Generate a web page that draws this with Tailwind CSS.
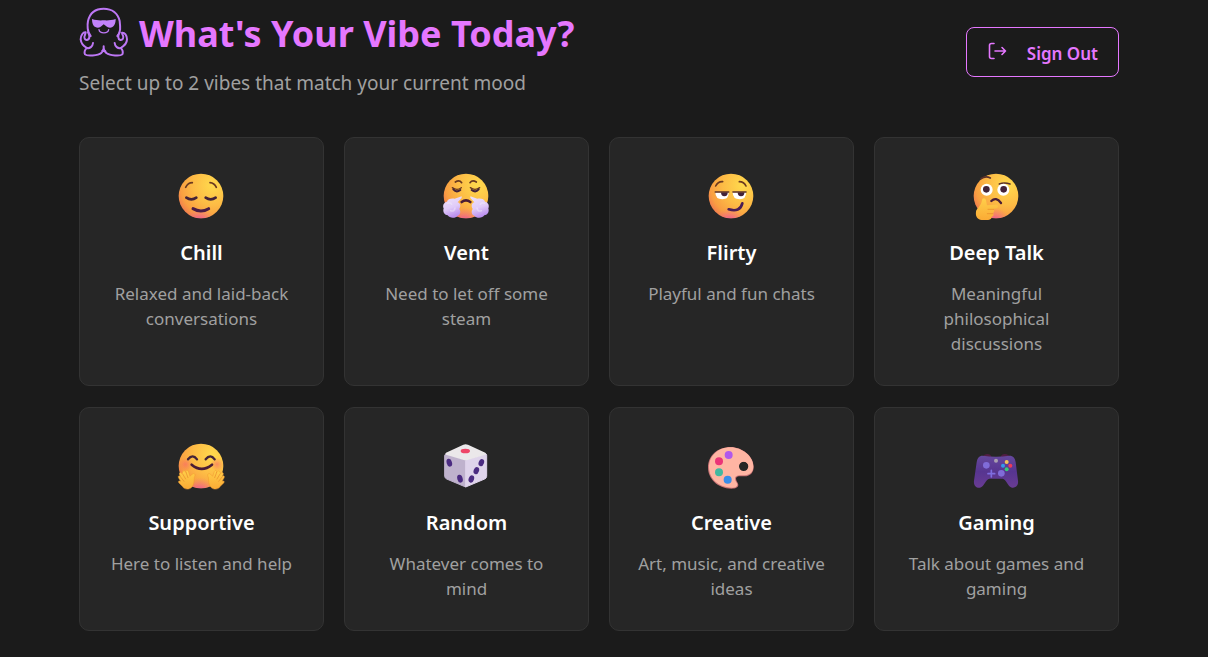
<!DOCTYPE html>
<html lang="en">
    <head>
        <meta charset="UTF-8">
        <meta name="viewport" content="width=device-width, initial-scale=1.0">
        <title>What's Your Vibe Today?</title>
        <script src="https://cdn.jsdelivr.net/npm/@tailwindcss/browser@4"></script>
    </head>
    <body class="bg-[#1b1b1b] text-white font-['Noto_Sans',sans-serif] overflow-x-hidden">

        <!-- Shared gradients for the vibe icons -->
        <svg class="absolute w-0 h-0" aria-hidden="true">
            <defs>
                <radialGradient id="face" cx="0.76" cy="0.26" r="0.9">
                    <stop offset="0" stop-color="#ffda4d"/>
                    <stop offset="0.5" stop-color="#fdbb45"/>
                    <stop offset="0.8" stop-color="#f99f42"/>
                    <stop offset="1" stop-color="#ee7352"/>
                </radialGradient>
                <radialGradient id="chin" cx="0.48" cy="1.08" r="0.32">
                    <stop offset="0" stop-color="#ee4fa6"/>
                    <stop offset="1" stop-color="#f1708a" stop-opacity="0"/>
                </radialGradient>
                <radialGradient id="blush">
                    <stop offset="0" stop-color="#f8636b" stop-opacity="0.6"/>
                    <stop offset="1" stop-color="#f8636b" stop-opacity="0"/>
                </radialGradient>
                <linearGradient id="puff" x1="0" y1="0" x2="0.3" y2="1">
                    <stop offset="0" stop-color="#efe2fb"/>
                    <stop offset="0.6" stop-color="#e0cbf8"/>
                    <stop offset="1" stop-color="#bd92f0"/>
                </linearGradient>
                <linearGradient id="hand" x1="0" y1="0" x2="0" y2="1">
                    <stop offset="0" stop-color="#ffcf4a"/>
                    <stop offset="1" stop-color="#fbab35"/>
                </linearGradient>
                <linearGradient id="pad" x1="0" y1="0" x2="0" y2="1">
                    <stop offset="0" stop-color="#65489d"/>
                    <stop offset="0.5" stop-color="#573590"/>
                    <stop offset="1" stop-color="#693c93"/>
                </linearGradient>
            </defs>
        </svg>

        <main class="pl-5 pr-[30px] pb-6">
            <div class="max-w-[1040px] mx-auto">

                <!-- Header -->
                <header class="flex justify-between items-center pb-10">
                    <div>
                        <h1 class="flex items-center gap-2.5 h-[70px] pb-0.5 text-4xl font-bold text-[#e577ff]">
                            <svg class="w-[50px] h-[50px] -mt-1 shrink-0" viewBox="28 20 150 150" fill="none" stroke="#bd77f5" stroke-width="6" stroke-linecap="round" stroke-linejoin="round" aria-hidden="true">
                                <path d="M63 107C52 96 53 72 55 62C61 36 80 25 102 25C128 25 145 40 150 62C152 80 154 96 143 107"/>
                                <path d="M55 96C61 106 61 117 52 119C46 120 42 113 45 106C47 101 48 99 48 96C40 95 33 105 33 117C34 128 43 138 52 143C45 147 43 156 46 162C52 168 85 166 95 158L102 149L110 158C121 166 152 168 158 162C161 156 159 147 153 143C162 138 172 129 172 117C172 105 165 96 157 97C157 100 158 102 160 106C163 113 159 120 152 119C144 117 144 106 150 96"/>
                                <path d="M52 143C60 145 69 139 70 128M153 143C145 145 136 139 135 128M102 138V149"/>
                                <path d="M102 138C101 145 97 149 93 153H111C107 149 103 145 102 138Z" fill="#bd77f5" stroke="none"/>
                                <path d="M88 88C90 101 115 101 117 88" stroke-width="4"/>
                                <path d="M67 56C80 60 89 61 102 60C115 61 124 60 138 56C138 72 132 82 121 82C111 82 108 75 102 72C97 75 94 82 85 82C73 82 67 73 67 56Z" fill="#c282fb" stroke="none"/>
                            </svg>
                            What's Your Vibe Today?
                        </h1>
                        <p class="text-[19px] leading-[27px] text-[#a0a0a0]">Select up to 2 vibes that match your current mood</p>
                    </div>
                    <button type="button" class="flex items-center h-[50px] px-5 pt-1 mt-1.5 gap-5 border border-[#e577ff] rounded-lg text-[17px] font-semibold text-[#e577ff]">
                        <svg class="w-5 h-5 -mt-1 shrink-0" viewBox="0 0 20 20" fill="none" stroke="currentColor" stroke-width="1.6" stroke-linecap="round" stroke-linejoin="round" aria-hidden="true">
                            <path d="M7 1.500H4.500Q2.500 1.500 2.500 3.500V14.500Q2.500 16.500 4.500 16.500H7M8 9H18.500M15 5.500L18.500 9L15 12.500"/>
                        </svg>
                        Sign Out
                    </button>
                </header>

                <!-- Vibe Grid -->
                <section class="grid grid-cols-2 md:grid-cols-4 gap-x-5 gap-y-[21px]">

                    <button type="button" class="flex flex-col items-center justify-start p-7 pb-[29px] bg-[#262626] border border-[#333333] rounded-[10px]">
                        <svg class="w-[62px] h-[58px]" viewBox="3 3 186 174" fill="none" stroke-linecap="round" aria-hidden="true">
                            <circle cx="93" cy="93" r="67" fill="url(#face)"/>
                            <circle cx="93" cy="93" r="67" fill="url(#chin)"/>
                            <path d="M47 67Q54 53 67 53M120 53Q133 54 139 67" stroke="#6b3a20" stroke-width="5"/>
                            <path d="M49 98Q64 108 79 98M107 98Q122 108 137 98" stroke="#432338" stroke-width="8"/>
                            <path d="M69 131Q93 145 116 131" stroke="#4a1d45" stroke-width="9"/>
                        </svg>
                        <h2 class="mt-[15px] text-xl leading-7 font-semibold">Chill</h2>
                        <p class="mt-3.5 text-[17px] leading-[25px] text-[#a0a0a0]">Relaxed and laid-back conversations</p>
                    </button>

                    <button type="button" class="flex flex-col items-center justify-start p-7 pb-[29px] bg-[#262626] border border-[#333333] rounded-[10px]">
                        <svg class="w-[62px] h-[58px]" viewBox="3 3 186 174" fill="none" stroke-linecap="round" stroke-linejoin="round" aria-hidden="true">
                            <circle cx="93" cy="93" r="67" fill="url(#face)"/>
                            <circle cx="93" cy="93" r="67" fill="url(#chin)"/>
                            <path d="M61 51Q73 43 80 53M105 53Q112 43 124 51" stroke="#6b3a20" stroke-width="5"/>
                            <path d="M52 68Q66 78 79 68M106 68Q120 78 134 68" stroke="#6b3a20" stroke-width="4"/>
                            <path d="M55 73Q64 84 76 75M110 75Q122 84 131 73" stroke="#432338" stroke-width="6"/>
                            <path d="M80 111Q93 101 106 111" stroke="#4a1d35" stroke-width="8"/>
                            <path d="M80 94L59 101C47 99 38 103 36 110C26 112 22 122 26 130C22 143 30 150 38 151C43 160 62 161 68 152C78 149 77 136 73 132C80 121 73 112 68 112L80 99Z" fill="url(#puff)"/>
                            <path d="M106 94L127 101C139 99 148 103 150 110C160 112 164 122 160 130C164 143 156 150 148 151C143 160 124 161 118 152C108 149 109 136 113 132C106 121 113 112 118 112L106 99Z" fill="url(#puff)"/>
                            <path d="M38 115Q46 111 50 118M47 137Q58 141 60 129M148 115Q140 111 136 118M139 137Q128 141 126 129" stroke="#f2e9fc" stroke-width="5" opacity="0.5"/>
                        </svg>
                        <h2 class="mt-[15px] text-xl leading-7 font-semibold">Vent</h2>
                        <p class="mt-3.5 text-[17px] leading-[25px] text-[#a0a0a0]">Need to let off some steam</p>
                    </button>

                    <button type="button" class="flex flex-col items-center justify-start p-7 pb-[29px] bg-[#262626] border border-[#333333] rounded-[10px]">
                        <svg class="w-[62px] h-[58px]" viewBox="3 3 186 174" fill="none" stroke-linecap="round" aria-hidden="true">
                            <circle cx="93" cy="93" r="67" fill="url(#face)"/>
                            <circle cx="93" cy="93" r="67" fill="url(#chin)"/>
                            <path d="M47 63Q54 49 68 50M118 50Q132 50 138 63" stroke="#6b3a20" stroke-width="5"/>
                            <path d="M46 82H86Q87 103 67 103Q46 103 46 82ZM98 82H138Q139 103 119 103Q98 103 98 82Z" fill="#fff"/>
                            <path d="M63 82H83Q84 94 73 94Q63 94 63 82ZM113 82H133Q134 94 123 94Q113 94 113 82Z" fill="#432338"/>
                            <path d="M46 81H86M99 81H138" stroke="#5b3029" stroke-width="5"/>
                            <path d="M86 133Q120 143 127 115" stroke="#4a1d55" stroke-width="8"/>
                        </svg>
                        <h2 class="mt-[15px] text-xl leading-7 font-semibold">Flirty</h2>
                        <p class="mt-3.5 text-[17px] leading-[25px] text-[#a0a0a0]">Playful and fun chats</p>
                    </button>

                    <button type="button" class="flex flex-col items-center justify-start p-7 pb-[29px] bg-[#262626] border border-[#333333] rounded-[10px]">
                        <svg class="w-[62px] h-[58px]" viewBox="3 3 186 174" fill="none" stroke-linecap="round" stroke-linejoin="round" aria-hidden="true">
                            <circle cx="93" cy="93" r="67" fill="url(#face)"/>
                            <circle cx="93" cy="93" r="67" fill="url(#chin)"/>
                            <path d="M48 41Q62 31 76 39M103 57Q118 51 135 57" stroke="#5b3029" stroke-width="5"/>
                            <circle cx="65" cy="74" r="18" fill="#fff"/>
                            <circle cx="115" cy="74" r="18" fill="#fff"/>
                            <circle cx="64" cy="73" r="10" fill="#432338"/>
                            <circle cx="116" cy="73" r="10" fill="#432338"/>
                            <path d="M79 108Q93 94 108 114" stroke="#4a1d35" stroke-width="7"/>
                            <path d="M51 106C51 98 62 97 63 106L66 121L92 119C101 119 101 129 93 130L85 132C90 137 88 142 84 144C88 150 85 154 80 155C80 163 72 165 63 165H50C36 163 31 153 33 140C34 131 48 125 51 106Z" fill="url(#hand)"/>
                            <path d="M69 133H86M67 146H83" stroke="#e8872b" stroke-width="2"/>
                        </svg>
                        <h2 class="mt-[15px] text-xl leading-7 font-semibold">Deep Talk</h2>
                        <p class="mt-3.5 text-[17px] leading-[25px] text-[#a0a0a0]">Meaningful philosophical discussions</p>
                    </button>

                    <button type="button" class="flex flex-col items-center justify-start p-7 pb-[29px] bg-[#262626] border border-[#333333] rounded-[10px]">
                        <svg class="w-[62px] h-[58px]" viewBox="3 3 186 174" fill="none" stroke-linecap="round" stroke-linejoin="round" aria-hidden="true">
                            <circle cx="93" cy="93" r="67" fill="url(#face)"/>
                            <circle cx="93" cy="93" r="67" fill="url(#chin)"/>
                            <circle cx="47" cy="88" r="20" fill="url(#blush)"/>
                            <circle cx="141" cy="88" r="20" fill="url(#blush)"/>
                            <path d="M54 73Q68 55 81 73M107 73Q121 55 134 73" stroke="#432338" stroke-width="7"/>
                            <path d="M65 89Q95 114 126 89" stroke="#4a1d35" stroke-width="8"/>
                            <path id="hug" d="M48 111C46 104 54 104 56 112L60 124L67 117C75 113 77 120 73 127C72 137 73 149 65 157C57 165 43 164 37 154L27 144C23 139 27 136 32 139L26 129C23 124 27 120 31 124L28 117C28 112 33 111 36 116L38 111C39 106 45 107 48 111Z" fill="url(#hand)" stroke="#f0982f" stroke-width="1.5"/>
                            <use href="#hug" transform="matrix(-1 0 0 1 188 0)"/>
                            <path d="M38 117L47 132M31 125L42 139M48 112L54 128M150 117L141 132M157 125L146 139M140 112L134 128" stroke="#e98a2d" stroke-width="2"/>
                        </svg>
                        <h2 class="mt-[15px] text-xl leading-7 font-semibold">Supportive</h2>
                        <p class="mt-3.5 text-[17px] leading-[25px] text-[#a0a0a0]">Here to listen and help</p>
                    </button>

                    <button type="button" class="flex flex-col items-center justify-start p-7 pb-[29px] bg-[#262626] border border-[#333333] rounded-[10px]">
                        <svg class="w-[62px] h-[58px]" viewBox="3 3 186 174" stroke-linejoin="round" aria-hidden="true">
                            <path d="M33 56L92 76V156L35 132Q30 130 29 124V61Z" fill="#bfb2cd" stroke="#bfb2cd" stroke-width="3"/>
                            <path d="M92 76L152 56Q155 57 155 61V124Q154 130 149 132L92 156Z" fill="#dfd4eb" stroke="#dfd4eb" stroke-width="3"/>
                            <path d="M33 53L85 29Q92 26 99 29L151 53Q155 56 151 59L98 75Q92 77 86 75L33 59Q29 56 33 53Z" fill="#ebe8ea"/>
                            <ellipse cx="91" cy="48" rx="14" ry="7" fill="#ee4567"/>
                            <g fill="#4b2b81">
                                <ellipse cx="43" cy="83" rx="8" ry="12" transform="rotate(-16 43 83)"/>
                                <ellipse cx="75" cy="131" rx="8" ry="12" transform="rotate(-16 75 131)"/>
                                <ellipse cx="139" cy="83" rx="8" ry="11" transform="rotate(20 139 83)"/>
                                <ellipse cx="124" cy="107" rx="8" ry="11" transform="rotate(20 124 107)"/>
                                <ellipse cx="109" cy="132" rx="8" ry="11" transform="rotate(20 109 132)"/>
                            </g>
                        </svg>
                        <h2 class="mt-[15px] text-xl leading-7 font-semibold">Random</h2>
                        <p class="mt-3.5 text-[17px] leading-[25px] text-[#a0a0a0]">Whatever comes to mind</p>
                    </button>

                    <button type="button" class="flex flex-col items-center justify-start p-7 pb-[29px] bg-[#262626] border border-[#333333] rounded-[10px]">
                        <svg class="w-[62px] h-[58px]" viewBox="3 3 186 174" aria-hidden="true">
                            <path fill-rule="evenodd" d="M91 36C126 36 161 63 161 96C161 112 151 124 134 124C119 124 108 122 108 131C108 139 115 143 115 150C114 158 106 161 95 161C51 160 24 129 24 98C24 62 53 36 91 36ZM131 80A15 15 0 1 0 131 110A15 15 0 1 0 131 80Z" fill="#c97476"/>
                            <path fill-rule="evenodd" d="M92 37C126 37 160 64 160 94C160 110 150 121 134 121C119 121 105 120 105 131C105 139 112 143 112 149C111 156 105 159 95 158C52 157 27 128 27 97C27 63 54 37 92 37ZM131 80A14 14 0 1 0 131 108A14 14 0 1 0 131 80Z" fill="#ffb5a3"/>
                            <circle cx="86" cy="60" r="12" fill="#b158ec"/>
                            <circle cx="57" cy="79" r="12" fill="#eb3478"/>
                            <circle cx="57" cy="112" r="12" fill="#43b8a0"/>
                            <circle cx="83" cy="134" r="12" fill="#398de9"/>
                        </svg>
                        <h2 class="mt-[15px] text-xl leading-7 font-semibold">Creative</h2>
                        <p class="mt-3.5 text-[17px] leading-[25px] text-[#a0a0a0]">Art, music, and creative ideas</p>
                    </button>

                    <button type="button" class="flex flex-col items-center justify-start p-7 pb-[29px] bg-[#262626] border border-[#333333] rounded-[10px]">
                        <svg class="w-[62px] h-[58px]" viewBox="3 3 186 174" aria-hidden="true">
                            <path d="M53 65Q57 57 66 57Q78 57 79 66ZM107 66Q109 57 120 57Q130 57 133 65Z" fill="#511e45"/>
                            <path d="M53 62Q93 68 133 62C145 62 150 69 152 82L159 137C161 152 151 160 141 158C128 154 124 133 113 131H73C62 133 58 154 45 158C35 160 25 152 27 137L35 82C37 69 42 62 53 62Z" fill="url(#pad)"/>
                            <circle cx="93" cy="77" r="6" fill="#aaa0b0"/>
                            <circle cx="64" cy="91" r="10" fill="#806cd8"/>
                            <circle cx="109" cy="115" r="10" fill="#806cd8"/>
                            <path d="M79 106V126M69 116H89" stroke="#7e6dde" stroke-width="5" stroke-linecap="round"/>
                            <circle cx="125" cy="81" r="6" fill="#f4c359"/>
                            <circle cx="114" cy="92" r="6" fill="#349bea"/>
                            <circle cx="136" cy="92" r="6" fill="#ed3b59"/>
                            <circle cx="125" cy="103" r="6" fill="#38ca7a"/>
                        </svg>
                        <h2 class="mt-[15px] text-xl leading-7 font-semibold">Gaming</h2>
                        <p class="mt-3.5 text-[17px] leading-[25px] text-[#a0a0a0]">Talk about games and gaming</p>
                    </button>

                </section>
            </div>
        </main>
    </body>
</html>
